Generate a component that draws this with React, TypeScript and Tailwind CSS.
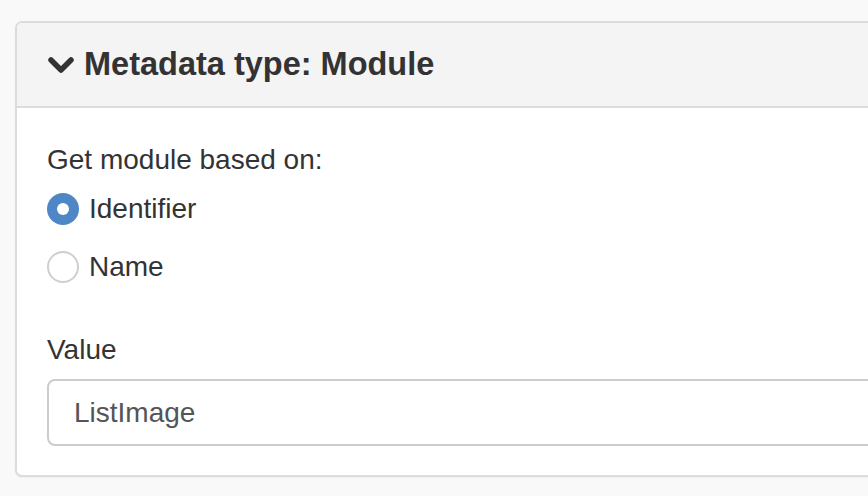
import { useState } from 'react'

function Chevron() {
    return (
        <svg width="26" height="18" viewBox="0 0 26 18" className="shrink-0">
            <path d="M3 4 L13 14 L23 4" fill="none" stroke="#333" strokeWidth="5.5" strokeLinecap="round" strokeLinejoin="round" />
        </svg>
    )
}

function Radio({ checked }: { checked: boolean }) {
    if (checked) {
        return (
            <span className="flex h-[32px] w-[32px] shrink-0 items-center justify-center rounded-full bg-[#4f87c6]">
                <span className="h-[12px] w-[12px] rounded-full bg-white" />
            </span>
        )
    }
    return <span className="h-[32px] w-[32px] shrink-0 rounded-full border-2 border-[#cfcfcf] bg-white" />
}

export default function App() {
    const [basis, setBasis] = useState('identifier')

    return (
        <div className="h-[496px] w-[868px] overflow-hidden bg-[#f9f9f9] pl-[15px] pt-[21px] font-['Liberation_Sans',Arial,sans-serif] text-[#333]">
            <div className="w-[1000px] overflow-hidden rounded-[7px] border-2 border-[#dcdcdc] bg-white shadow-[0_1px_2px_rgba(0,0,0,0.05)]">
                {/* Panel heading */}
                <div className="flex h-[85px] items-center gap-[10px] border-b-2 border-[#dcdcdc] bg-[#f4f4f4] pl-[31px]">
                    <Chevron />
                    <h3 className="text-[32.5px] font-bold leading-none">Metadata type: Module</h3>
                </div>

                {/* Panel body */}
                <div className="pb-[29px] pl-[30px] pt-[36px]">
                    <div className="text-[28px] leading-[32px]">Get module based on:</div>

                    <div className="mt-[17px] flex flex-col gap-[26px]">
                        {[
                            { id: 'identifier', label: 'Identifier' },
                            { id: 'name', label: 'Name' },
                        ].map((o) => (
                            <label key={o.id} className="flex cursor-pointer items-center gap-[10px]" onClick={() => setBasis(o.id)}>
                                <Radio checked={basis === o.id} />
                                <span className="text-[28px] leading-[32px]">{o.label}</span>
                            </label>
                        ))}
                    </div>

                    <div className="mt-[51px] text-[28px] leading-[32px]">Value</div>
                    <div className="mt-[13px] flex h-[67px] items-center rounded-[8px] border-2 border-[#cccccc] pl-[25px] text-[28px] text-[#555]">
                        ListImage
                    </div>
                </div>
            </div>
        </div>
    )
}
